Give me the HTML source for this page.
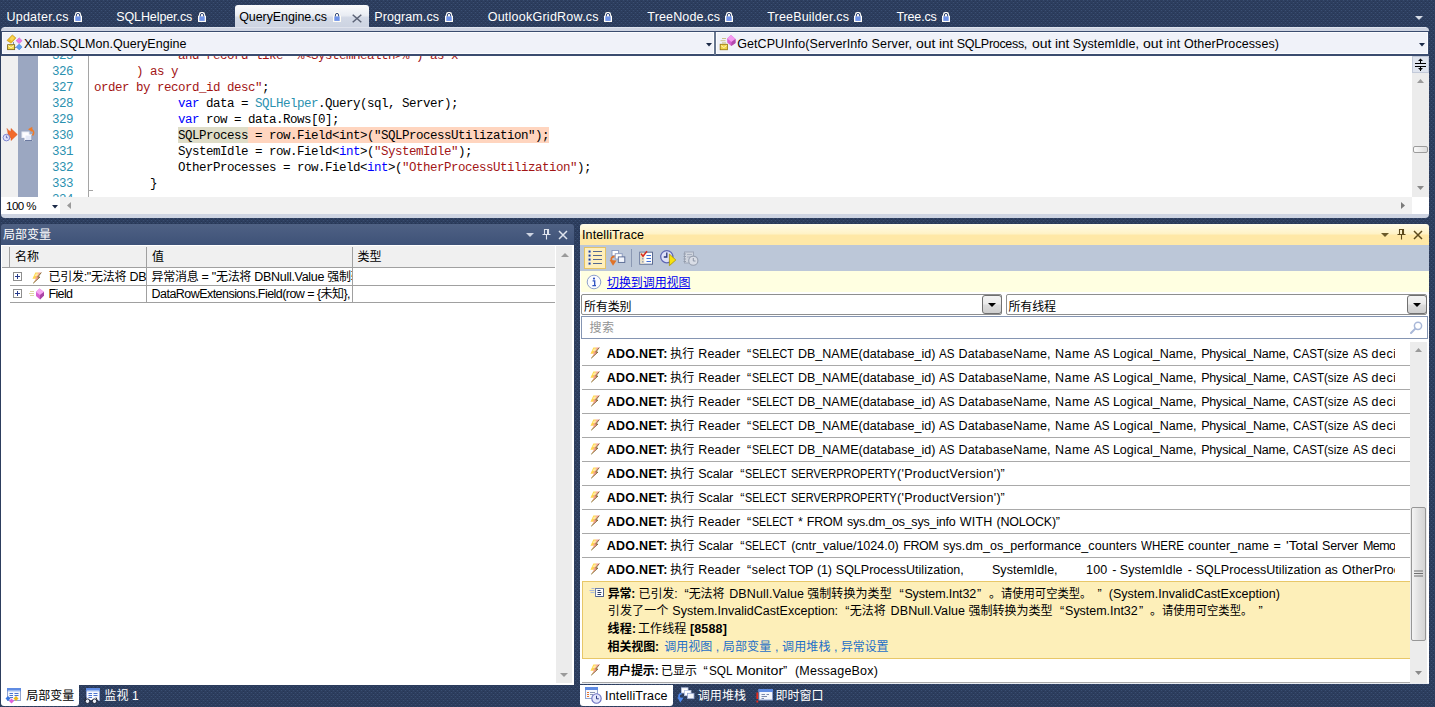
<!DOCTYPE html>
<html><head><meta charset="utf-8"><title>VS</title><style>
*{box-sizing:border-box}
html,body{margin:0;padding:0}
body{width:1435px;height:707px;overflow:hidden;position:relative;background:#2d3e5e;font:12.5px/16px "Liberation Sans","Noto Sans CJK SC",sans-serif;color:#000}
.a{position:absolute}
.t{position:absolute;white-space:pre;height:16px;line-height:16px}
.w{color:#fff}
.b{font-weight:bold}
.c{font-size:12px}
.m{font:12.5px/16px "Liberation Mono","Noto Sans CJK SC",monospace;letter-spacing:-0.5px}
.ln{color:#2b91af}
.s{color:#a31515}.k{color:#00f}.ty{color:#2b91af}
.lk{color:#1e6fc8}
svg{position:absolute;overflow:visible}
</style></head><body>
<svg class="a" style="left:0;top:0" width="1435" height="707"><defs><linearGradient id="boltg" x1="0" y1="0" x2="1" y2=".55"><stop offset=".38" stop-color="#ffd84c"/><stop offset=".62" stop-color="#f4979a"/></linearGradient><pattern id="dots" width="4" height="4" patternUnits="userSpaceOnUse"><rect width="4" height="4" fill="#2d3e5e"/><rect x="3" y="0" width="1" height="1" fill="#3a4e72"/><rect x="1" y="2" width="1" height="1" fill="#3a4e72"/><rect x="1" y="1" width="1" height="1" fill="#263555"/><rect x="3" y="3" width="1" height="1" fill="#263555"/></pattern></defs><rect width="1435" height="707" fill="url(#dots)"/></svg>
<div class="a" style="left:235px;top:5px;width:134px;height:23px;border-radius:3px 3px 0 0;background:linear-gradient(#fbfcfd,#e9ecf3 45%,#d3d9e6 55%,#ccd3e1)"></div>
<div id="t1" class="t w" style="left:6.4px;top:9px;letter-spacing:0.259px;">Updater.cs</div>
<svg style="left:74px;top:12px" width="8" height="10" viewBox="0 0 8 10"><rect x="1" y="0" width="6" height="6" rx="2.2" fill="#fffdf6"/><rect x="0" y="3.6" width="8" height="6.4" rx=".5" fill="#fffdf6"/><path d="M2.4 4.6V3Q2.4 1.4 4 1.4T5.6 3V4.6" fill="none" stroke="#33487a" stroke-width="1"/><rect x="1.3" y="4.4" width="5.4" height="4.5" fill="#6f93e9"/></svg>
<div id="t2" class="t w" style="left:116.2px;top:9px;letter-spacing:-0.093px;">SQLHelper.cs</div>
<svg style="left:198px;top:12px" width="8" height="10" viewBox="0 0 8 10"><rect x="1" y="0" width="6" height="6" rx="2.2" fill="#fffdf6"/><rect x="0" y="3.6" width="8" height="6.4" rx=".5" fill="#fffdf6"/><path d="M2.4 4.6V3Q2.4 1.4 4 1.4T5.6 3V4.6" fill="none" stroke="#33487a" stroke-width="1"/><rect x="1.3" y="4.4" width="5.4" height="4.5" fill="#6f93e9"/></svg>
<div id="t3" class="t " style="left:239.2px;top:9px;letter-spacing:-0.087px;">QueryEngine.cs</div>
<svg style="left:333px;top:12px" width="8" height="10" viewBox="0 0 8 10"><rect x="1" y="0" width="6" height="6" rx="2.2" fill="#fffdf6"/><rect x="0" y="3.6" width="8" height="6.4" rx=".5" fill="#fffdf6"/><path d="M2.4 4.6V3Q2.4 1.4 4 1.4T5.6 3V4.6" fill="none" stroke="#33487a" stroke-width="1"/><rect x="1.3" y="4.4" width="5.4" height="4.5" fill="#6f93e9"/></svg>
<div id="t4" class="t w" style="left:374.3px;top:9px;letter-spacing:0.088px;">Program.cs</div>
<svg style="left:445px;top:12px" width="8" height="10" viewBox="0 0 8 10"><rect x="1" y="0" width="6" height="6" rx="2.2" fill="#fffdf6"/><rect x="0" y="3.6" width="8" height="6.4" rx=".5" fill="#fffdf6"/><path d="M2.4 4.6V3Q2.4 1.4 4 1.4T5.6 3V4.6" fill="none" stroke="#33487a" stroke-width="1"/><rect x="1.3" y="4.4" width="5.4" height="4.5" fill="#6f93e9"/></svg>
<div id="t5" class="t w" style="left:487.7px;top:9px;letter-spacing:0.245px;">OutlookGridRow.cs</div>
<svg style="left:604px;top:12px" width="8" height="10" viewBox="0 0 8 10"><rect x="1" y="0" width="6" height="6" rx="2.2" fill="#fffdf6"/><rect x="0" y="3.6" width="8" height="6.4" rx=".5" fill="#fffdf6"/><path d="M2.4 4.6V3Q2.4 1.4 4 1.4T5.6 3V4.6" fill="none" stroke="#33487a" stroke-width="1"/><rect x="1.3" y="4.4" width="5.4" height="4.5" fill="#6f93e9"/></svg>
<div id="t6" class="t w" style="left:647.3px;top:9px;letter-spacing:0.161px;">TreeNode.cs</div>
<svg style="left:725px;top:12px" width="8" height="10" viewBox="0 0 8 10"><rect x="1" y="0" width="6" height="6" rx="2.2" fill="#fffdf6"/><rect x="0" y="3.6" width="8" height="6.4" rx=".5" fill="#fffdf6"/><path d="M2.4 4.6V3Q2.4 1.4 4 1.4T5.6 3V4.6" fill="none" stroke="#33487a" stroke-width="1"/><rect x="1.3" y="4.4" width="5.4" height="4.5" fill="#6f93e9"/></svg>
<div id="t7" class="t w" style="left:767.2px;top:9px;letter-spacing:0.182px;">TreeBuilder.cs</div>
<svg style="left:854px;top:12px" width="8" height="10" viewBox="0 0 8 10"><rect x="1" y="0" width="6" height="6" rx="2.2" fill="#fffdf6"/><rect x="0" y="3.6" width="8" height="6.4" rx=".5" fill="#fffdf6"/><path d="M2.4 4.6V3Q2.4 1.4 4 1.4T5.6 3V4.6" fill="none" stroke="#33487a" stroke-width="1"/><rect x="1.3" y="4.4" width="5.4" height="4.5" fill="#6f93e9"/></svg>
<div id="t8" class="t w" style="left:896.6px;top:9px;letter-spacing:-0.170px;">Tree.cs</div>
<svg style="left:942px;top:12px" width="8" height="10" viewBox="0 0 8 10"><rect x="1" y="0" width="6" height="6" rx="2.2" fill="#fffdf6"/><rect x="0" y="3.6" width="8" height="6.4" rx=".5" fill="#fffdf6"/><path d="M2.4 4.6V3Q2.4 1.4 4 1.4T5.6 3V4.6" fill="none" stroke="#33487a" stroke-width="1"/><rect x="1.3" y="4.4" width="5.4" height="4.5" fill="#6f93e9"/></svg>
<svg style="left:352px;top:13.5px" width="10" height="9"><path d="M.7 .7L9.3 8.3M9.3 .7L.7 8.3" stroke="#5b6275" stroke-width="1.5" fill="none"/></svg>
<svg style="left:1415px;top:16px" width="8" height="4"><path d="M0 0H8L4 4Z" fill="#d6dbe6"/></svg>
<div class="a" style="left:1px;top:27px;width:1428px;height:191px;border-radius:4px;background:#ced4e2"></div>
<div class="a" style="left:4px;top:27px;width:1422px;height:1px;background:#dfe3ed"></div>
<div class="a" style="left:1px;top:31px;width:1428px;height:25px;background:#3b4c6f"></div>
<div class="a" style="left:2px;top:32px;width:712px;height:22px;background:#f0f2f9;border:1px solid #fbfcfe"></div>
<div class="a" style="left:716px;top:32px;width:712px;height:22px;background:#f0f2f9;border:1px solid #fbfcfe"></div>
<div class="a" style="left:714px;top:32px;width:2px;height:23px;background:#67768f"></div>
<svg style="left:706px;top:43px" width="6" height="3.5"><path d="M0 0H6L3 3.500Z" fill="#1b2a47"/></svg>
<svg style="left:1419px;top:43px" width="6" height="3.5"><path d="M0 0H6L3 3.500Z" fill="#1b2a47"/></svg>
<svg style="left:6px;top:35px" width="17" height="16" viewBox="0 0 17 16">
<path d="M7.5 7V12.5H10.5" fill="none" stroke="#8592ab" stroke-width="1"/>
<path d="M6.3 -.1L9.9 2.9L5.1 8.2L1 5.4Z" fill="#eebc22" stroke="#c2920f" stroke-width=".6"/><path d="M6.2 1L8.6 3L5.8 6L3.6 4.2Z" fill="#f9d65a"/>
<path d="M13.2 2.8L16.1 5.7L13.2 8.6L10.2 5.7Z" fill="#ec7ae8" stroke="#c054bd" stroke-width=".5"/>
<path d="M13.2 9L16.1 11.9L13.2 14.9L10.2 11.9Z" fill="#5c9ff2" stroke="#3a78c8" stroke-width=".5"/>
<rect x="1.6" y="9.7" width="7" height="4.9" fill="#f4da4c" stroke="#806c1c" stroke-width=".9"/><path d="M2.2 10.6L5.1 12.7L8 10.6" fill="none" stroke="#fffad0" stroke-width=".9"/></svg>
<div id="t9" class="t " style="left:24px;top:36px;letter-spacing:0.056px;">Xnlab.SQLMon.QueryEngine</div>
<svg style="left:719px;top:35px" width="17" height="16" viewBox="0 0 17 16">
<path d="M3 3.5H7M1.5 5.7H6.5M3 7.9H7" stroke="#c9c18a" stroke-width="1"/>
<path d="M12 0L16.5 4L16.5 8L12.3 11L8.2 7.5L8.2 3.5Z" fill="#d760d2"/><path d="M12 0L16.5 4L12.5 7L8.2 3.5Z" fill="#f49af0"/><path d="M12.5 7L16.5 4V8L12.3 11Z" fill="#b24aae"/>
<rect x="1.2" y="9.3" width="7.2" height="5.4" fill="#f2d64a" stroke="#9a7c12" stroke-width=".9"/><path d="M2 10.5L4.8 12.6L7.6 10.5" fill="none" stroke="#fff7c4" stroke-width=".9"/></svg>
<div id="t10" class="t " style="left:737.3px;top:36px;letter-spacing:0.059px;">GetCPUInfo(ServerInfo</div>
<div id="t11" class="t " style="left:871.6px;top:36px;letter-spacing:0.148px;">Server,</div>
<div id="t12" class="t " style="left:915.6px;top:36px;transform:scaleX(1.1213);transform-origin:0 0;">out</div>
<div id="t13" class="t " style="left:938.8px;top:36px;transform:scaleX(1.0831);transform-origin:0 0;">int</div>
<div id="t14" class="t " style="left:956.8px;top:36px;letter-spacing:-0.314px;">SQLProcess,</div>
<div id="t15" class="t " style="left:1031.6px;top:36px;transform:scaleX(1.1213);transform-origin:0 0;">out</div>
<div id="t16" class="t " style="left:1054.8px;top:36px;transform:scaleX(1.0907);transform-origin:0 0;">int</div>
<div id="t17" class="t " style="left:1072.8px;top:36px;letter-spacing:0.079px;">SystemIdle,</div>
<div id="t18" class="t " style="left:1142.9px;top:36px;transform:scaleX(1.1270);transform-origin:0 0;">out</div>
<div id="t19" class="t " style="left:1166.4px;top:36px;letter-spacing:0.348px;">int</div>
<div id="t20" class="t " style="left:1184px;top:36px;letter-spacing:0.087px;">OtherProcesses)</div>
<div class="a" style="left:1px;top:56px;width:1411px;height:141px;background:#fff;overflow:hidden">
<div class="a" style="left:0;top:0;width:17px;height:141px;background:#f0f0f0"></div>
<div class="a" style="left:17px;top:0;width:20px;height:141px;background:#9ba7c1"></div>
<div class="a" style="left:87px;top:0;width:1px;height:141px;background:#a5a5a5"></div>
<div class="a" style="left:88px;top:134px;width:4px;height:1px;background:#a5a5a5"></div>
<div class="a" style="left:177px;top:71px;width:70px;height:16px;background:#dfddc8"></div>
<div class="a" style="left:247px;top:71px;width:301px;height:16px;background:#ffd5bf"></div>
<div class="t m ln" style="left:51px;top:-8px">325</div>
<div class="t m" style="left:177px;top:-8px"><span class="s">and record like '%&lt;SystemHealth&gt;%') as x</span></div>
<div class="t m ln" style="left:51px;top:8px">326</div>
<div class="t m" style="left:135px;top:8px"><span class="s">) as y</span></div>
<div class="t m ln" style="left:51px;top:24px">327</div>
<div class="t m" style="left:93px;top:24px"><span class="s">order by record_id desc"</span>;</div>
<div class="t m ln" style="left:51px;top:40px">328</div>
<div class="t m" style="left:177px;top:40px"><span class="k">var</span> data = <span class="ty">SQLHelper</span>.Query(sql, Server);</div>
<div class="t m ln" style="left:51px;top:56px">329</div>
<div class="t m" style="left:177px;top:56px"><span class="k">var</span> row = data.Rows[0];</div>
<div class="t m ln" style="left:51px;top:72px">330</div>
<div class="t m" style="left:177px;top:72px">SQLProcess = row.Field&lt;int&gt;("SQLProcessUtilization");</div>
<div class="t m ln" style="left:51px;top:88px">331</div>
<div class="t m" style="left:177px;top:88px">SystemIdle = row.Field&lt;<span class="k">int</span>&gt;(<span class="s">"SystemIdle"</span>);</div>
<div class="t m ln" style="left:51px;top:104px">332</div>
<div class="t m" style="left:177px;top:104px">OtherProcesses = row.Field&lt;<span class="k">int</span>&gt;(<span class="s">"OtherProcessUtilization"</span>);</div>
<div class="t m ln" style="left:51px;top:120px">333</div>
<div class="t m" style="left:149px;top:120px">}</div>
<div class="t m ln" style="left:51px;top:136px">334</div>
<svg style="left:1px;top:71px" width="16" height="16" viewBox="0 0 16 16">
<path d="M5 1.5Q6.5 4.2 9 4.5V1.5L15.3 7.5L9 13.5V10.5Q6 10.5 4.5 12.5Q7.5 7.5 5 1.5Z" fill="#f26a2a" stroke="#d84e14" stroke-width=".5"/>
<circle cx="4.4" cy="10.6" r="3.3" fill="#dfe1fb" stroke="#7f86d0" stroke-width="1"/><path d="M4.4 8.6V10.8H5.8" fill="none" stroke="#4a54a8" stroke-width=".8"/></svg>
<svg style="left:19px;top:70px" width="16" height="17" viewBox="0 0 16 17">
<rect x="2" y="6" width="7" height="5.5" fill="#fdfdff" stroke="#e8ebf5" stroke-width="1"/>
<rect x="5" y="9" width="7" height="5.5" fill="#e4e9f7" stroke="#fff" stroke-width="1"/><path d="M5 14.5H12V9" fill="none" stroke="#5a6a94" stroke-width=".9"/>
<path d="M12.5 9.5Q15.5 5.5 11 3.2" fill="none" stroke="#f07a28" stroke-width="1.5"/><path d="M12.3 .8L8 3.3L12.3 6Z" fill="#f07a28"/></svg>
</div>
<div class="a" style="left:1412px;top:56px;width:17px;height:141px;background:#ececec"></div>
<div class="a" style="left:1412px;top:56px;width:17px;height:17px;background:#dfe4ee;border:1px solid #c3cad9"></div>
<svg style="left:1414px;top:58px" width="13" height="13" viewBox="0 0 13 13"><path d="M1 5.500H12M1 8.500H12M6.500 1V5M6.500 9V13" stroke="#000" stroke-width="1" fill="none"/><path d="M4 3L6.5 .5L9 3ZM4 10L6.5 12.5L9 10Z" fill="#000"/></svg>
<svg style="left:1417px;top:79px" width="7" height="4"><path d="M0 4H7L3.5 0Z" fill="#9a9a9a"/></svg>
<svg style="left:1417px;top:186px" width="7" height="4"><path d="M0 0H7L3.5 4Z" fill="#8a8a8a"/></svg>
<div class="a" style="left:1413px;top:146px;width:15px;height:7px;border:1px solid #9c9c9c;border-radius:2px;background:linear-gradient(90deg,#fafafa,#dcdcdc)"></div>
<div class="a" style="left:1px;top:197px;width:1411px;height:17px;background:#f1f1f1"></div>
<div class="a" style="left:1412px;top:197px;width:17px;height:17px;background:#fff"></div>
<div class="a" style="left:1px;top:197px;width:59px;height:17px;background:#fff"></div>
<div id="t21" class="t " style="left:6px;top:198px;letter-spacing:-0.502px;font-size:11.5px">100 %</div>
<svg style="left:52px;top:205px" width="6" height="3.5"><path d="M0 0H6L3 3.500Z" fill="#1b2a47"/></svg>
<svg style="left:67px;top:202px" width="4" height="7"><path d="M4 0V7L0 3.5Z" fill="#9a9a9a"/></svg>
<svg style="left:1401px;top:202px" width="4" height="7"><path d="M0 0V7L4 3.5Z" fill="#7a7a7a"/></svg>
<div class="a" style="left:1px;top:224px;width:573px;height:21px;border-radius:3px 3px 0 0;background:linear-gradient(#4f6184,#3e5278)"></div>
<div id="t22" class="t w c" style="left:3px;top:227px;letter-spacing:-0.005px;">局部变量</div>
<svg style="left:526px;top:233px" width="8" height="4"><path d="M0 0H8L4 4Z" fill="#ced4e2"/></svg>
<svg style="left:542px;top:229px" width="9" height="11" viewBox="0 0 9 11"><path d="M2.5 .5H6.5V5.5H2.5ZM.5 5.5H8.5M4.5 5.5V10.5" fill="none" stroke="#dfe4ee" stroke-width="1.1"/><path d="M5.5 1V5" stroke="#dfe4ee" stroke-width="1"/></svg>
<svg style="left:558px;top:230px" width="10" height="10"><path d="M1 1L9 9M9 1L1 9" stroke="#dfe4ee" stroke-width="1.5" fill="none"/></svg>
<div class="a" style="left:1px;top:245px;width:573px;height:440px;background:#fff"></div>
<div class="a" style="left:2px;top:246px;width:553px;height:22px;background:#f0f0f0;border-bottom:1px solid #a0a0a0"></div>
<div class="a" style="left:9px;top:247px;width:1px;height:56px;background:#a0a0a0"></div>
<div class="a" style="left:146px;top:247px;width:1px;height:56px;background:#a0a0a0"></div>
<div class="a" style="left:352px;top:247px;width:1px;height:56px;background:#a0a0a0"></div>
<div class="a" style="left:9px;top:268px;width:1px;height:36px;background:#fff"></div>
<div class="a" style="left:10px;top:285px;width:545px;height:1px;background:#a0a0a0"></div>
<div class="a" style="left:10px;top:302px;width:545px;height:1px;background:#a0a0a0"></div>
<div id="t23" class="t c" style="left:15px;top:249px;letter-spacing:-0.016px;">名称</div>
<div id="t24" class="t c" style="left:151.992px;top:249px;">值</div>
<div id="t25" class="t c" style="left:357.5px;top:249px;letter-spacing:-0.016px;">类型</div>
<svg style="left:13px;top:272px" width="9" height="9"><rect x=".5" y=".5" width="8" height="8" fill="#fff" stroke="#8e8e8e"/><path d="M2 4.5H7M4.5 2V7" stroke="#263a8c" stroke-width="1"/></svg>
<svg style="left:13px;top:289px" width="9" height="9"><rect x=".5" y=".5" width="8" height="8" fill="#fff" stroke="#8e8e8e"/><path d="M2 4.5H7M4.5 2V7" stroke="#263a8c" stroke-width="1"/></svg>
<svg style="left:31.500px;top:271.500px" width="10" height="12" viewBox="0 0 11 13"><path d="M3.7 .5H10.3L6.3 5.5H8.7L1.3 12.3L4.2 7.2H.5Z" fill="url(#boltg)"/><path d="M10.3 .5L6.3 5.5H8.7L1.3 12.3" fill="none" stroke="#6f5e1c" stroke-width=".9" stroke-linejoin="round"/><path d="M4.3 1.6H7.6L5.6 4.2H2.7Z" fill="#fff3b0" opacity=".8"/></svg>
<svg style="left:29px;top:288px" width="16" height="12" viewBox="0 0 16 12"><path d="M1 3.5H5M0 5.5H5M1 7.5H5" stroke="#d8cf9a" stroke-width=".9"/><path d="M10.5 .5L15 4V7.5L11 11.5L7 8V4Z" fill="#d760d2"/><path d="M10.5 .5L15 4L11 7L7 4Z" fill="#f6a6f2"/><path d="M11 7L15 4V7.5L11 11.5Z" fill="#a844a4"/></svg>
<div class="a" style="left:48px;top:268px;width:98px;height:17px;overflow:hidden"><div id="t26" class="t " style="left:0.5px;top:1px;letter-spacing:-0.280px;"><span class="c">已引发</span>:"<span class="c">无法将</span> DBNull</div></div>
<div class="a" style="left:147px;top:268px;width:205px;height:17px;overflow:hidden"><div id="t27" class="t " style="left:4.6px;top:1px;letter-spacing:-0.292px;"><span class="c">异常消息</span> = "<span class="c">无法将</span> DBNull.Value <span class="c">强制转</span></div></div>
<div id="t28" class="t " style="left:48.5px;top:286px;letter-spacing:-0.648px;">Field</div>
<div class="a" style="left:147px;top:286px;width:205px;height:17px;overflow:hidden"><div id="t29" class="t " style="left:4.6px;top:0px;letter-spacing:-0.545px;">DataRowExtensions.Field(row = {<span class="c">未知</span>}, c</div></div>
<div class="a" style="left:556px;top:246px;width:16px;height:437px;background:#ececec"></div>
<svg style="left:561px;top:253px" width="8" height="4"><path d="M0 4H8L4 0Z" fill="#9a9a9a"/></svg>
<svg style="left:560px;top:673px" width="8" height="4"><path d="M0 0H8L4 4Z" fill="#9a9a9a"/></svg>
<div class="a" style="left:1px;top:685px;width:78px;height:21px;border-radius:0 0 3px 3px;background:#fff"></div>
<svg style="left:6.5px;top:688px" width="14" height="13" viewBox="0 0 14 13"><rect x=".5" y=".5" width="13" height="12" fill="#f6f8fd" stroke="#93a5cf"/><rect x="0" y="0" width="14" height="3.2" fill="#5f8be2"/><rect x="1" y="2.2" width="12" height="1" fill="#a9c2f2"/><path d="M2.5 5.5H6M7.5 5.5H11.5M2.5 7.5H6M7.5 7.5H11.5M2.5 9.5H6" stroke="#4a74d0" stroke-width="1"/></svg>
<svg style="left:5px;top:695px" width="14" height="9"><path d="M3 1L5.5 3.5L3 6L.5 3.5Z" fill="#3c78e0"/><path d="M11 1L13.5 3.5L11 6L8.500 3.5Z" fill="#e8b820"/><path d="M6.500 3.500L9 6L6.500 8.500L4 6Z" fill="#e060dc"/></svg>
<div id="t30" class="t c" style="left:26.3px;top:688px;letter-spacing:-0.005px;">局部变量</div>
<svg style="left:85.5px;top:688px" width="14" height="13" viewBox="0 0 14 13"><rect x=".5" y=".5" width="13" height="12" fill="#f6f8fd" stroke="#93a5cf"/><rect x="0" y="0" width="14" height="3.2" fill="#5f8be2"/><rect x="1" y="2.2" width="12" height="1" fill="#a9c2f2"/><path d="M2.5 5.5H6M7.5 5.5H11.5M2.5 7.5H6M7.5 7.5H11.5M2.5 9.5H6" stroke="#4a74d0" stroke-width="1"/></svg>
<svg style="left:83.500px;top:696px" width="14" height="8"><path d="M2 1.500L.5 5M12 1.500L13.500 5" stroke="#1c2438" stroke-width="1"/><circle cx="3.500" cy="5.200" r="2.300" fill="#e8ecf6" stroke="#1c2438"/><circle cx="10.500" cy="5.200" r="2.300" fill="#e8ecf6" stroke="#1c2438"/><path d="M5.800 4.800H8.200" stroke="#1c2438"/></svg>
<div id="t31" class="t w c" style="left:104.3px;top:688px;letter-spacing:0.095px;">监视 1</div>
<div class="a" style="left:580px;top:224px;width:849px;height:21px;border-radius:3px 3px 0 0;background:linear-gradient(#fffbe8,#fff3c8 45%,#ffe8a6 55%,#ffe8a6)"></div>
<div id="t32" class="t " style="left:582px;top:227px;letter-spacing:0.121px;">IntelliTrace</div>
<svg style="left:1381px;top:233px" width="8" height="4"><path d="M0 0H8L4 4Z" fill="#6b5a2a"/></svg>
<svg style="left:1397px;top:229px" width="9" height="11" viewBox="0 0 9 11"><path d="M2.5 .5H6.5V5.5H2.5ZM.5 5.5H8.5M4.5 5.5V10.5" fill="none" stroke="#5d4a1c" stroke-width="1.1"/><path d="M5.5 1V5" stroke="#5d4a1c" stroke-width="1"/></svg>
<svg style="left:1413px;top:230px" width="10" height="10"><path d="M1 1L9 9M9 1L1 9" stroke="#5d4a1c" stroke-width="1.5" fill="none"/></svg>
<div class="a" style="left:580px;top:245px;width:849px;height:439px;background:#fff"></div>
<div class="a" style="left:580px;top:245px;width:849px;height:26px;background:#bcc7d8"></div>
<div class="a" style="left:584px;top:247px;width:22px;height:22px;background:#ffefbb;border:1px solid #e5c365"></div>
<svg style="left:587px;top:250px" width="16" height="16" viewBox="0 0 16 16"><path d="M6 1.500H15M6 5.500H15M6 9.500H15M6 13.500H15" stroke="#55698f" stroke-width="1"/>
<g fill="#1f3a86" stroke="#dfe6f6" stroke-width=".6"><rect x="1.200" y=".2" width="2.700" height="2.700"/><rect x="1.200" y="4.200" width="2.700" height="2.700"/><rect x="1.200" y="8.200" width="2.700" height="2.700"/><rect x="1.200" y="12.200" width="2.700" height="2.700"/></g></svg>
<svg style="left:609px;top:249px" width="18" height="18" viewBox="0 0 18 18"><rect x="3" y="1.500" width="6.500" height="5.300" fill="#fff" stroke="#8797bd" stroke-width=".9"/><rect x="6.200" y="4.700" width="7" height="5.300" fill="#fff" stroke="#8797bd" stroke-width=".9"/><rect x="9.300" y="7.900" width="6.500" height="5.500" fill="#f2f5fc" stroke="#53648f" stroke-width=".9"/>
<path d="M5.500 7.500Q1 8 2.800 12" fill="none" stroke="#e07228" stroke-width="1.800"/><path d="M.6 11L4 16.700L7.600 11.500Z" fill="#e07228"/></svg>
<div class="a" style="left:631px;top:249px;width:1px;height:18px;background:#8b98b3"></div>
<svg style="left:638px;top:250px" width="16" height="16" viewBox="0 0 16 16"><rect x="1.800" y="2.200" width="12.700" height="12" fill="#fdfdfe" stroke="#5b6b92"/><rect x="2.300" y="2.700" width="4" height="11" fill="#ebe1c8"/><path d="M8.500 5.500H13M8.500 8.500H13M8.500 11.500H13" stroke="#3f6fd8" stroke-width="1.200"/><path d="M4 8H5.500V9.500H4ZM4 11H5.500V12.500H4Z" fill="#9aa3b8"/><path d="M3 3.600L5 6.200L9 1.200" fill="none" stroke="#d8281c" stroke-width="1.500"/></svg>
<svg style="left:660px;top:249px" width="17" height="18" viewBox="0 0 17 18"><circle cx="6.800" cy="7.700" r="6.100" fill="#dddff8" stroke="#6068b4" stroke-width="1.300"/><path d="M6.800 3.500V8H3.800" fill="none" stroke="#2a3478" stroke-width="1.300"/><path d="M9.400 5L15.800 11L9.400 16.700Z" fill="#f8e210" stroke="#a89208" stroke-width=".8"/></svg>
<svg style="left:683px;top:251px" width="16" height="15" viewBox="0 0 16 15" opacity=".85"><rect x="1.500" y="1" width="9" height="11" fill="#d4d8e0" stroke="#9aa2b2"/><path d="M.5 3H3M.5 5.500H3M.5 8H3M.5 10.500H3" stroke="#8e96a6"/><path d="M4 3.500H9M4 6H9" stroke="#a4acbc"/><circle cx="10.300" cy="9.700" r="4.600" fill="#dfe2e9" stroke="#9098a8" stroke-width="1.100"/><path d="M10.300 7V10H12.500" fill="none" stroke="#858d9d" stroke-width="1"/></svg>
<div class="a" style="left:581px;top:271px;width:848px;height:21px;background:#ffffe1"></div>
<svg style="left:586px;top:274px" width="16" height="16" viewBox="0 0 16 16"><circle cx="8" cy="8" r="6.8" fill="#fbfcff" stroke="#8ea0cc" stroke-width="1"/><circle cx="8" cy="4.6" r="1.05" fill="#2b4fc0"/><path d="M6.6 6.9H8.7V11.4M6.4 11.6H10" fill="none" stroke="#2b4fc0" stroke-width="1.3"/></svg>
<div id="t33" class="t c" style="left:607px;top:275px;letter-spacing:-0.086px;color:#0000f0;text-decoration:underline">切换到调用视图</div>
<div class="a" style="left:581px;top:294px;width:421px;height:21px;background:#fff;border:1px solid #8e8f8f;border-radius:2px"></div>
<div class="a" style="left:982px;top:295px;width:20px;height:19px;border:1px solid #707070;border-radius:3px;background:linear-gradient(#f4f4f4,#eaeaea 48%,#dcdcdc 52%,#cfcfcf)"></div>
<svg style="left:988px;top:303px" width="8" height="4"><path d="M0 0H8L4 4Z" fill="#000"/></svg>
<div id="t34" class="t c" style="left:584px;top:299px;letter-spacing:-0.172px;">所有类别</div>
<div class="a" style="left:1006px;top:294px;width:421px;height:21px;background:#fff;border:1px solid #8e8f8f;border-radius:2px"></div>
<div class="a" style="left:1407px;top:295px;width:20px;height:19px;border:1px solid #707070;border-radius:3px;background:linear-gradient(#f4f4f4,#eaeaea 48%,#dcdcdc 52%,#cfcfcf)"></div>
<svg style="left:1413px;top:303px" width="8" height="4"><path d="M0 0H8L4 4Z" fill="#000"/></svg>
<div id="t35" class="t c" style="left:1008.5px;top:299px;letter-spacing:-0.172px;">所有线程</div>
<div class="a" style="left:581px;top:316px;width:847px;height:23px;background:#fff;border:1px solid #8595b2"></div>
<div id="t36" class="t c" style="left:589.5px;top:320px;letter-spacing:0.484px;color:#939393">搜索</div>
<svg style="left:1410px;top:321px" width="13" height="13" viewBox="0 0 13 13"><circle cx="8" cy="4.8" r="3.6" fill="none" stroke="#a9b8d8" stroke-width="1.5"/><path d="M5.3 7.6L1 12" stroke="#a9b8d8" stroke-width="2" stroke-linecap="round"/></svg>
<div class="a" style="left:1410px;top:342px;width:17px;height:341px;background:#ececec"></div>
<svg style="left:1415px;top:348px" width="7" height="4"><path d="M0 4H7L3.5 0Z" fill="#9a9a9a"/></svg>
<svg style="left:1415px;top:671px" width="7" height="4"><path d="M0 0H7L3.5 4Z" fill="#8a8a8a"/></svg>
<div class="a" style="left:1411px;top:507px;width:15px;height:134px;border:1px solid #979797;border-radius:2px;background:linear-gradient(90deg,#f4f4f4,#e2e2e2 50%,#d4d4d4)"></div>
<svg style="left:1414px;top:570px" width="9" height="8"><path d="M0 1H9M0 3.5H9M0 6H9" stroke="#6f6f6f" stroke-width="1"/></svg>
<div class="a" style="left:582px;top:365px;width:828px;height:1px;background:#a9a9a9"></div>
<svg style="left:589.7px;top:347px" width="10" height="12" viewBox="0 0 11 13"><path d="M3.7 .5H10.3L6.3 5.5H8.7L1.3 12.3L4.2 7.2H.5Z" fill="url(#boltg)"/><path d="M10.3 .5L6.3 5.5H8.7L1.3 12.3" fill="none" stroke="#6f5e1c" stroke-width=".9" stroke-linejoin="round"/><path d="M4.3 1.6H7.6L5.6 4.2H2.7Z" fill="#fff3b0" opacity=".8"/></svg>
<div id="t37" class="t b" style="left:606.7px;top:346px;letter-spacing:0.238px;">ADO.NET:</div>
<div id="t38" class="t c" style="left:670.3px;top:346px;letter-spacing:-0.116px;">执行</div>
<div id="t39" class="t " style="left:698.3px;top:346px;letter-spacing:0.160px;">Reader</div>
<div class="a" style="left:600px;top:345px;width:795px;height:18px;overflow:hidden"><div id="t40" class="t " style="left:147.1px;top:1px;">“</div>
<div id="t41" class="t " style="left:151.9px;top:1px;transform:scaleX(0.8614);transform-origin:0 0;">SELECT</div>
<div id="t42" class="t " style="left:197.9px;top:1px;letter-spacing:0.033px;">DB_NAME(database_id)</div>
<div id="t43" class="t " style="left:339px;top:1px;transform:scaleX(0.9348);transform-origin:0 0;">AS</div>
<div id="t44" class="t " style="left:358.6px;top:1px;letter-spacing:0.139px;">DatabaseName,</div>
<div id="t45" class="t " style="left:455.1px;top:1px;letter-spacing:0.419px;">Name</div>
<div id="t46" class="t " style="left:493.5px;top:1px;transform:scaleX(0.9348);transform-origin:0 0;">AS</div>
<div id="t47" class="t " style="left:512.9px;top:1px;letter-spacing:0.026px;">Logical_Name,</div>
<div id="t48" class="t " style="left:601.2px;top:1px;letter-spacing:-0.194px;">Physical_Name,</div>
<div id="t49" class="t " style="left:693.2px;top:1px;transform:scaleX(0.9291);transform-origin:0 0;">CAST(size</div>
<div id="t50" class="t " style="left:753px;top:1px;transform:scaleX(0.8989);transform-origin:0 0;">AS</div>
<div id="t51" class="t " style="left:771.4px;top:1px;letter-spacing:0.587px;">deci</div></div>
<div class="a" style="left:582px;top:389px;width:828px;height:1px;background:#a9a9a9"></div>
<svg style="left:589.7px;top:371px" width="10" height="12" viewBox="0 0 11 13"><path d="M3.7 .5H10.3L6.3 5.5H8.7L1.3 12.3L4.2 7.2H.5Z" fill="url(#boltg)"/><path d="M10.3 .5L6.3 5.5H8.7L1.3 12.3" fill="none" stroke="#6f5e1c" stroke-width=".9" stroke-linejoin="round"/><path d="M4.3 1.6H7.6L5.6 4.2H2.7Z" fill="#fff3b0" opacity=".8"/></svg>
<div id="t52" class="t b" style="left:606.7px;top:370px;letter-spacing:0.238px;">ADO.NET:</div>
<div id="t53" class="t c" style="left:670.3px;top:370px;letter-spacing:-0.116px;">执行</div>
<div id="t54" class="t " style="left:698.3px;top:370px;letter-spacing:0.160px;">Reader</div>
<div class="a" style="left:600px;top:369px;width:795px;height:18px;overflow:hidden"><div id="t55" class="t " style="left:147.1px;top:1px;">“</div>
<div id="t56" class="t " style="left:151.9px;top:1px;transform:scaleX(0.8614);transform-origin:0 0;">SELECT</div>
<div id="t57" class="t " style="left:197.9px;top:1px;letter-spacing:0.033px;">DB_NAME(database_id)</div>
<div id="t58" class="t " style="left:339px;top:1px;transform:scaleX(0.9348);transform-origin:0 0;">AS</div>
<div id="t59" class="t " style="left:358.6px;top:1px;letter-spacing:0.139px;">DatabaseName,</div>
<div id="t60" class="t " style="left:455.1px;top:1px;letter-spacing:0.419px;">Name</div>
<div id="t61" class="t " style="left:493.5px;top:1px;transform:scaleX(0.9348);transform-origin:0 0;">AS</div>
<div id="t62" class="t " style="left:512.9px;top:1px;letter-spacing:0.026px;">Logical_Name,</div>
<div id="t63" class="t " style="left:601.2px;top:1px;letter-spacing:-0.194px;">Physical_Name,</div>
<div id="t64" class="t " style="left:693.2px;top:1px;transform:scaleX(0.9291);transform-origin:0 0;">CAST(size</div>
<div id="t65" class="t " style="left:753px;top:1px;transform:scaleX(0.8989);transform-origin:0 0;">AS</div>
<div id="t66" class="t " style="left:771.4px;top:1px;letter-spacing:0.587px;">deci</div></div>
<div class="a" style="left:582px;top:413px;width:828px;height:1px;background:#a9a9a9"></div>
<svg style="left:589.7px;top:395px" width="10" height="12" viewBox="0 0 11 13"><path d="M3.7 .5H10.3L6.3 5.5H8.7L1.3 12.3L4.2 7.2H.5Z" fill="url(#boltg)"/><path d="M10.3 .5L6.3 5.5H8.7L1.3 12.3" fill="none" stroke="#6f5e1c" stroke-width=".9" stroke-linejoin="round"/><path d="M4.3 1.6H7.6L5.6 4.2H2.7Z" fill="#fff3b0" opacity=".8"/></svg>
<div id="t67" class="t b" style="left:606.7px;top:394px;letter-spacing:0.238px;">ADO.NET:</div>
<div id="t68" class="t c" style="left:670.3px;top:394px;letter-spacing:-0.116px;">执行</div>
<div id="t69" class="t " style="left:698.3px;top:394px;letter-spacing:0.160px;">Reader</div>
<div class="a" style="left:600px;top:393px;width:795px;height:18px;overflow:hidden"><div id="t70" class="t " style="left:147.1px;top:1px;">“</div>
<div id="t71" class="t " style="left:151.9px;top:1px;transform:scaleX(0.8614);transform-origin:0 0;">SELECT</div>
<div id="t72" class="t " style="left:197.9px;top:1px;letter-spacing:0.033px;">DB_NAME(database_id)</div>
<div id="t73" class="t " style="left:339px;top:1px;transform:scaleX(0.9348);transform-origin:0 0;">AS</div>
<div id="t74" class="t " style="left:358.6px;top:1px;letter-spacing:0.139px;">DatabaseName,</div>
<div id="t75" class="t " style="left:455.1px;top:1px;letter-spacing:0.419px;">Name</div>
<div id="t76" class="t " style="left:493.5px;top:1px;transform:scaleX(0.9348);transform-origin:0 0;">AS</div>
<div id="t77" class="t " style="left:512.9px;top:1px;letter-spacing:0.026px;">Logical_Name,</div>
<div id="t78" class="t " style="left:601.2px;top:1px;letter-spacing:-0.194px;">Physical_Name,</div>
<div id="t79" class="t " style="left:693.2px;top:1px;transform:scaleX(0.9291);transform-origin:0 0;">CAST(size</div>
<div id="t80" class="t " style="left:753px;top:1px;transform:scaleX(0.8989);transform-origin:0 0;">AS</div>
<div id="t81" class="t " style="left:771.4px;top:1px;letter-spacing:0.587px;">deci</div></div>
<div class="a" style="left:582px;top:437px;width:828px;height:1px;background:#a9a9a9"></div>
<svg style="left:589.7px;top:419px" width="10" height="12" viewBox="0 0 11 13"><path d="M3.7 .5H10.3L6.3 5.5H8.7L1.3 12.3L4.2 7.2H.5Z" fill="url(#boltg)"/><path d="M10.3 .5L6.3 5.5H8.7L1.3 12.3" fill="none" stroke="#6f5e1c" stroke-width=".9" stroke-linejoin="round"/><path d="M4.3 1.6H7.6L5.6 4.2H2.7Z" fill="#fff3b0" opacity=".8"/></svg>
<div id="t82" class="t b" style="left:606.7px;top:418px;letter-spacing:0.238px;">ADO.NET:</div>
<div id="t83" class="t c" style="left:670.3px;top:418px;letter-spacing:-0.116px;">执行</div>
<div id="t84" class="t " style="left:698.3px;top:418px;letter-spacing:0.160px;">Reader</div>
<div class="a" style="left:600px;top:417px;width:795px;height:18px;overflow:hidden"><div id="t85" class="t " style="left:147.1px;top:1px;">“</div>
<div id="t86" class="t " style="left:151.9px;top:1px;transform:scaleX(0.8614);transform-origin:0 0;">SELECT</div>
<div id="t87" class="t " style="left:197.9px;top:1px;letter-spacing:0.033px;">DB_NAME(database_id)</div>
<div id="t88" class="t " style="left:339px;top:1px;transform:scaleX(0.9348);transform-origin:0 0;">AS</div>
<div id="t89" class="t " style="left:358.6px;top:1px;letter-spacing:0.139px;">DatabaseName,</div>
<div id="t90" class="t " style="left:455.1px;top:1px;letter-spacing:0.419px;">Name</div>
<div id="t91" class="t " style="left:493.5px;top:1px;transform:scaleX(0.9348);transform-origin:0 0;">AS</div>
<div id="t92" class="t " style="left:512.9px;top:1px;letter-spacing:0.026px;">Logical_Name,</div>
<div id="t93" class="t " style="left:601.2px;top:1px;letter-spacing:-0.194px;">Physical_Name,</div>
<div id="t94" class="t " style="left:693.2px;top:1px;transform:scaleX(0.9291);transform-origin:0 0;">CAST(size</div>
<div id="t95" class="t " style="left:753px;top:1px;transform:scaleX(0.8989);transform-origin:0 0;">AS</div>
<div id="t96" class="t " style="left:771.4px;top:1px;letter-spacing:0.587px;">deci</div></div>
<div class="a" style="left:582px;top:461px;width:828px;height:1px;background:#a9a9a9"></div>
<svg style="left:589.7px;top:443px" width="10" height="12" viewBox="0 0 11 13"><path d="M3.7 .5H10.3L6.3 5.5H8.7L1.3 12.3L4.2 7.2H.5Z" fill="url(#boltg)"/><path d="M10.3 .5L6.3 5.5H8.7L1.3 12.3" fill="none" stroke="#6f5e1c" stroke-width=".9" stroke-linejoin="round"/><path d="M4.3 1.6H7.6L5.6 4.2H2.7Z" fill="#fff3b0" opacity=".8"/></svg>
<div id="t97" class="t b" style="left:606.7px;top:442px;letter-spacing:0.238px;">ADO.NET:</div>
<div id="t98" class="t c" style="left:670.3px;top:442px;letter-spacing:-0.116px;">执行</div>
<div id="t99" class="t " style="left:698.3px;top:442px;letter-spacing:0.160px;">Reader</div>
<div class="a" style="left:600px;top:441px;width:795px;height:18px;overflow:hidden"><div id="t100" class="t " style="left:147.1px;top:1px;">“</div>
<div id="t101" class="t " style="left:151.9px;top:1px;transform:scaleX(0.8614);transform-origin:0 0;">SELECT</div>
<div id="t102" class="t " style="left:197.9px;top:1px;letter-spacing:0.033px;">DB_NAME(database_id)</div>
<div id="t103" class="t " style="left:339px;top:1px;transform:scaleX(0.9348);transform-origin:0 0;">AS</div>
<div id="t104" class="t " style="left:358.6px;top:1px;letter-spacing:0.139px;">DatabaseName,</div>
<div id="t105" class="t " style="left:455.1px;top:1px;letter-spacing:0.419px;">Name</div>
<div id="t106" class="t " style="left:493.5px;top:1px;transform:scaleX(0.9348);transform-origin:0 0;">AS</div>
<div id="t107" class="t " style="left:512.9px;top:1px;letter-spacing:0.026px;">Logical_Name,</div>
<div id="t108" class="t " style="left:601.2px;top:1px;letter-spacing:-0.194px;">Physical_Name,</div>
<div id="t109" class="t " style="left:693.2px;top:1px;transform:scaleX(0.9291);transform-origin:0 0;">CAST(size</div>
<div id="t110" class="t " style="left:753px;top:1px;transform:scaleX(0.8989);transform-origin:0 0;">AS</div>
<div id="t111" class="t " style="left:771.4px;top:1px;letter-spacing:0.587px;">deci</div></div>
<div class="a" style="left:582px;top:485px;width:828px;height:1px;background:#a9a9a9"></div>
<svg style="left:589.7px;top:467px" width="10" height="12" viewBox="0 0 11 13"><path d="M3.7 .5H10.3L6.3 5.5H8.7L1.3 12.3L4.2 7.2H.5Z" fill="url(#boltg)"/><path d="M10.3 .5L6.3 5.5H8.7L1.3 12.3" fill="none" stroke="#6f5e1c" stroke-width=".9" stroke-linejoin="round"/><path d="M4.3 1.6H7.6L5.6 4.2H2.7Z" fill="#fff3b0" opacity=".8"/></svg>
<div id="t112" class="t b" style="left:606.7px;top:466px;letter-spacing:0.238px;">ADO.NET:</div>
<div id="t113" class="t c" style="left:670.3px;top:466px;letter-spacing:-0.116px;">执行</div>
<div id="t114" class="t " style="left:698.3px;top:466px;letter-spacing:-0.107px;">Scalar</div>
<div class="a" style="left:600px;top:465px;width:795px;height:18px;overflow:hidden"><div id="t115" class="t " style="left:140.3px;top:1px;">“</div>
<div id="t116" class="t " style="left:145.1px;top:1px;transform:scaleX(0.8553);transform-origin:0 0;">SELECT</div>
<div id="t117" class="t " style="left:191px;top:1px;transform:scaleX(0.8821);transform-origin:0 0;">SERVERPROPERTY</div>
<div id="t118" class="t " style="left:296.9px;top:1px;letter-spacing:0.343px;">('ProductVersion')</div>
<div id="t119" class="t " style="left:400.4px;top:1px;">”</div></div>
<div class="a" style="left:582px;top:509px;width:828px;height:1px;background:#a9a9a9"></div>
<svg style="left:589.7px;top:491px" width="10" height="12" viewBox="0 0 11 13"><path d="M3.7 .5H10.3L6.3 5.5H8.7L1.3 12.3L4.2 7.2H.5Z" fill="url(#boltg)"/><path d="M10.3 .5L6.3 5.5H8.7L1.3 12.3" fill="none" stroke="#6f5e1c" stroke-width=".9" stroke-linejoin="round"/><path d="M4.3 1.6H7.6L5.6 4.2H2.7Z" fill="#fff3b0" opacity=".8"/></svg>
<div id="t120" class="t b" style="left:606.7px;top:490px;letter-spacing:0.238px;">ADO.NET:</div>
<div id="t121" class="t c" style="left:670.3px;top:490px;letter-spacing:-0.116px;">执行</div>
<div id="t122" class="t " style="left:698.3px;top:490px;letter-spacing:-0.107px;">Scalar</div>
<div class="a" style="left:600px;top:489px;width:795px;height:18px;overflow:hidden"><div id="t123" class="t " style="left:140.3px;top:1px;">“</div>
<div id="t124" class="t " style="left:145.1px;top:1px;transform:scaleX(0.8553);transform-origin:0 0;">SELECT</div>
<div id="t125" class="t " style="left:191px;top:1px;transform:scaleX(0.8821);transform-origin:0 0;">SERVERPROPERTY</div>
<div id="t126" class="t " style="left:296.9px;top:1px;letter-spacing:0.343px;">('ProductVersion')</div>
<div id="t127" class="t " style="left:400.4px;top:1px;">”</div></div>
<div class="a" style="left:582px;top:533px;width:828px;height:1px;background:#a9a9a9"></div>
<svg style="left:589.7px;top:515px" width="10" height="12" viewBox="0 0 11 13"><path d="M3.7 .5H10.3L6.3 5.5H8.7L1.3 12.3L4.2 7.2H.5Z" fill="url(#boltg)"/><path d="M10.3 .5L6.3 5.5H8.7L1.3 12.3" fill="none" stroke="#6f5e1c" stroke-width=".9" stroke-linejoin="round"/><path d="M4.3 1.6H7.6L5.6 4.2H2.7Z" fill="#fff3b0" opacity=".8"/></svg>
<div id="t128" class="t b" style="left:606.7px;top:514px;letter-spacing:0.238px;">ADO.NET:</div>
<div id="t129" class="t c" style="left:670.3px;top:514px;letter-spacing:-0.116px;">执行</div>
<div id="t130" class="t " style="left:698.3px;top:514px;letter-spacing:0.160px;">Reader</div>
<div class="a" style="left:600px;top:513px;width:795px;height:18px;overflow:hidden"><div id="t131" class="t " style="left:147.1px;top:1px;">“</div>
<div id="t132" class="t " style="left:152px;top:1px;transform:scaleX(0.8532);transform-origin:0 0;">SELECT</div>
<div id="t133" class="t " style="left:197.913px;top:1px;">*</div>
<div id="t134" class="t " style="left:206.8px;top:1px;letter-spacing:-0.238px;">FROM</div>
<div id="t135" class="t " style="left:247px;top:1px;letter-spacing:-0.233px;">sys.dm_os_sys_info</div>
<div id="t136" class="t " style="left:359.7px;top:1px;letter-spacing:0.254px;">WITH</div>
<div id="t137" class="t " style="left:396.5px;top:1px;letter-spacing:-0.218px;">(NOLOCK)</div>
<div id="t138" class="t " style="left:455.8px;top:1px;">”</div></div>
<div class="a" style="left:582px;top:557px;width:828px;height:1px;background:#a9a9a9"></div>
<svg style="left:589.7px;top:539px" width="10" height="12" viewBox="0 0 11 13"><path d="M3.7 .5H10.3L6.3 5.5H8.7L1.3 12.3L4.2 7.2H.5Z" fill="url(#boltg)"/><path d="M10.3 .5L6.3 5.5H8.7L1.3 12.3" fill="none" stroke="#6f5e1c" stroke-width=".9" stroke-linejoin="round"/><path d="M4.3 1.6H7.6L5.6 4.2H2.7Z" fill="#fff3b0" opacity=".8"/></svg>
<div id="t139" class="t b" style="left:606.7px;top:538px;letter-spacing:0.238px;">ADO.NET:</div>
<div id="t140" class="t c" style="left:670.3px;top:538px;letter-spacing:-0.116px;">执行</div>
<div id="t141" class="t " style="left:698.3px;top:538px;letter-spacing:-0.107px;">Scalar</div>
<div class="a" style="left:600px;top:537px;width:795px;height:18px;overflow:hidden"><div id="t142" class="t " style="left:140.3px;top:1px;">“</div>
<div id="t143" class="t " style="left:145.2px;top:1px;transform:scaleX(0.8470);transform-origin:0 0;">SELECT</div>
<div id="t144" class="t " style="left:191.2px;top:1px;letter-spacing:-0.006px;">(cntr_value/1024.0)</div>
<div id="t145" class="t " style="left:303.2px;top:1px;letter-spacing:-0.437px;">FROM</div>
<div id="t146" class="t " style="left:342.9px;top:1px;letter-spacing:0.074px;">sys.dm_os_performance_counters</div>
<div id="t147" class="t " style="left:540.8px;top:1px;transform:scaleX(0.9241);transform-origin:0 0;">WHERE</div>
<div id="t148" class="t " style="left:587.9px;top:1px;letter-spacing:0.107px;">counter_name</div>
<div id="t149" class="t " style="left:673.594px;top:1px;">=</div>
<div id="t150" class="t " style="left:686.1px;top:1px;transform:scaleX(1.1112);transform-origin:0 0;">'Total</div>
<div id="t151" class="t " style="left:721.9px;top:1px;letter-spacing:-0.086px;">Server</div>
<div id="t152" class="t " style="left:762.9px;top:1px;letter-spacing:-0.541px;">Memory</div></div>
<div class="a" style="left:582px;top:581px;width:828px;height:1px;background:#a9a9a9"></div>
<svg style="left:589.7px;top:563px" width="10" height="12" viewBox="0 0 11 13"><path d="M3.7 .5H10.3L6.3 5.5H8.7L1.3 12.3L4.2 7.2H.5Z" fill="url(#boltg)"/><path d="M10.3 .5L6.3 5.5H8.7L1.3 12.3" fill="none" stroke="#6f5e1c" stroke-width=".9" stroke-linejoin="round"/><path d="M4.3 1.6H7.6L5.6 4.2H2.7Z" fill="#fff3b0" opacity=".8"/></svg>
<div id="t153" class="t b" style="left:606.7px;top:562px;letter-spacing:0.238px;">ADO.NET:</div>
<div id="t154" class="t c" style="left:670.3px;top:562px;letter-spacing:-0.116px;">执行</div>
<div id="t155" class="t " style="left:698.3px;top:562px;letter-spacing:0.160px;">Reader</div>
<div class="a" style="left:600px;top:561px;width:795px;height:18px;overflow:hidden"><div id="t156" class="t " style="left:147.1px;top:1px;">“</div>
<div id="t157" class="t " style="left:151.8px;top:1px;letter-spacing:0.189px;">select</div>
<div id="t158" class="t " style="left:188.6px;top:1px;letter-spacing:-0.392px;">TOP</div>
<div id="t159" class="t " style="left:217px;top:1px;letter-spacing:-0.141px;">(1)</div>
<div id="t160" class="t " style="left:235.8px;top:1px;letter-spacing:0.008px;">SQLProcessUtilization,</div>
<div id="t161" class="t " style="left:392px;top:1px;letter-spacing:0.029px;">SystemIdle,</div>
<div id="t162" class="t " style="left:486.1px;top:1px;letter-spacing:0.120px;">100</div>
<div id="t163" class="t " style="left:512.214px;top:1px;">-</div>
<div id="t164" class="t " style="left:519.8px;top:1px;letter-spacing:0.095px;">SystemIdle</div>
<div id="t165" class="t " style="left:587.714px;top:1px;">-</div>
<div id="t166" class="t " style="left:595.7px;top:1px;letter-spacing:0.042px;">SQLProcessUtilization</div>
<div id="t167" class="t " style="left:724.7px;top:1px;letter-spacing:-0.203px;">as</div>
<div id="t168" class="t " style="left:741.9px;top:1px;letter-spacing:0.154px;">OtherProcesses</div></div>
<div class="a" style="left:582px;top:581px;width:828px;height:78px;background:#fdefb9;border:1px solid #e8c768;border-right:0"></div>
<svg style="left:589px;top:587px" width="16" height="11" viewBox="0 0 16 11"><rect x="6.500" y="1.500" width="8" height="8" fill="#fff" stroke="#6d7ea6"/><path d="M7 9.500H14.500V2" fill="none" stroke="#50618c"/><path d="M8.500 3.500H11.500M8.500 5.500H12.500M8.500 7.500H12" stroke="#2c3c66" stroke-width="1"/><path d="M2.500 1.500H5.500M.5 3.500H5.500M1.500 5.500H5.500" stroke="#a9b9dc" stroke-width="1"/></svg>
<div id="t169" class="t b c" style="left:607.8px;top:586px;letter-spacing:-0.250px;">异常:</div>
<div id="t170" class="t c" style="left:638.6px;top:586px;letter-spacing:-0.148px;">已引发:</div>
<div id="t171" class="t " style="left:684.4px;top:586px;">“</div>
<div id="t172" class="t c" style="left:688.8px;top:586px;letter-spacing:-0.208px;">无法将</div>
<div id="t173" class="t " style="left:729.2px;top:586px;letter-spacing:0.134px;">DBNull.Value</div>
<div id="t174" class="t c" style="left:807.2px;top:586px;letter-spacing:0.081px;">强制转换为类型</div>
<div id="t175" class="t " style="left:899.6px;top:586px;">“</div>
<div id="t176" class="t " style="left:904.4px;top:586px;letter-spacing:-0.105px;">System.Int32</div>
<div id="t177" class="t " style="left:977px;top:586px;">”</div>
<div id="t178" class="t c" style="left:989.1px;top:586px;">。</div>
<div id="t179" class="t c" style="left:1001.2px;top:586px;transform:scaleX(0.9405);transform-origin:0 0;">请使用可空类型。</div>
<div id="t180" class="t " style="left:1097.4px;top:586px;">”</div>
<div id="t181" class="t " style="left:1108.7px;top:586px;letter-spacing:0.036px;">(System.InvalidCastException)</div>
<div id="t182" class="t c" style="left:607.8px;top:603px;letter-spacing:0.146px;">引发了一个</div>
<div id="t183" class="t " style="left:672.3px;top:603px;letter-spacing:0.016px;">System.InvalidCastException:</div>
<div id="t184" class="t " style="left:845.2px;top:603px;">“</div>
<div id="t185" class="t c" style="left:849.8px;top:603px;letter-spacing:-0.008px;">无法将</div>
<div id="t186" class="t " style="left:890.6px;top:603px;letter-spacing:0.089px;">DBNull.Value</div>
<div id="t187" class="t c" style="left:968.4px;top:603px;letter-spacing:0.014px;">强制转换为类型</div>
<div id="t188" class="t " style="left:1059.9px;top:603px;">“</div>
<div id="t189" class="t " style="left:1065.1px;top:603px;letter-spacing:-0.032px;">System.Int32</div>
<div id="t190" class="t " style="left:1139px;top:603px;">”</div>
<div id="t191" class="t c" style="left:1149.9px;top:603px;">。</div>
<div id="t192" class="t c" style="left:1162px;top:603px;transform:scaleX(0.9394);transform-origin:0 0;">请使用可空类型。</div>
<div id="t193" class="t " style="left:1258.5px;top:603px;">”</div>
<div id="t194" class="t b c" style="left:607.6px;top:621px;letter-spacing:0.150px;">线程:</div>
<div id="t195" class="t c" style="left:637.9px;top:621px;letter-spacing:0.161px;">工作线程</div>
<div id="t196" class="t b" style="left:689.9px;top:621px;letter-spacing:0.172px;">[8588]</div>
<div id="t197" class="t b c" style="left:607.6px;top:639px;letter-spacing:-0.125px;">相关视图:</div>
<div id="t198" class="t lk c" style="left:664.2px;top:639px;letter-spacing:0.028px;">调用视图</div>
<div id="t199" class="t lk" style="left:715.8px;top:639px;">,</div>
<div id="t200" class="t lk c" style="left:722.8px;top:639px;letter-spacing:0.161px;">局部变量</div>
<div id="t201" class="t lk" style="left:775px;top:639px;">,</div>
<div id="t202" class="t lk c" style="left:782px;top:639px;letter-spacing:0.161px;">调用堆栈</div>
<div id="t203" class="t lk" style="left:834px;top:639px;">,</div>
<div id="t204" class="t lk c" style="left:841px;top:639px;letter-spacing:-0.172px;">异常设置</div>
<div class="a" style="left:582px;top:682px;width:828px;height:1px;background:#a9a9a9"></div>
<svg style="left:589.7px;top:664px" width="10" height="12" viewBox="0 0 11 13"><path d="M3.7 .5H10.3L6.3 5.5H8.7L1.3 12.3L4.2 7.2H.5Z" fill="url(#boltg)"/><path d="M10.3 .5L6.3 5.5H8.7L1.3 12.3" fill="none" stroke="#6f5e1c" stroke-width=".9" stroke-linejoin="round"/><path d="M4.3 1.6H7.6L5.6 4.2H2.7Z" fill="#fff3b0" opacity=".8"/></svg>
<div id="t205" class="t b c" style="left:607.2px;top:663px;letter-spacing:-0.125px;">用户提示:</div>
<div id="t206" class="t c" style="left:661.1px;top:663px;letter-spacing:-0.008px;">已显示</div>
<div id="t207" class="t " style="left:703.6px;top:663px;">“</div>
<div id="t208" class="t " style="left:708.9px;top:663px;transform:scaleX(0.9394);transform-origin:0 0;">SQL</div>
<div id="t209" class="t " style="left:736.4px;top:663px;transform:scaleX(1.1298);transform-origin:0 0;">Monitor</div>
<div id="t210" class="t " style="left:783.1px;top:663px;">”</div>
<div id="t211" class="t " style="left:795px;top:663px;letter-spacing:0.210px;">(MessageBox)</div>
<div class="a" style="left:580px;top:683px;width:849px;height:1px;background:#e9ecf2"></div>
<div class="a" style="left:580px;top:685px;width:93px;height:21px;border-radius:0 0 3px 3px;background:#fff"></div>
<svg style="left:585px;top:687px" width="13" height="12" viewBox="0 0 13 12"><rect x=".5" y=".5" width="12" height="11" fill="#f6f8fd" stroke="#93a5cf"/><rect x="0" y="0" width="13" height="3" fill="#5f8be2"/><path d="M2 5.500H4M2 7.500H4M2 9.500H4" stroke="#e8742a"/><path d="M5 5.500H10M5 7.500H8" stroke="#8a96b4"/></svg>
<svg style="left:591px;top:692.500px" width="11" height="11"><circle cx="5.500" cy="5.500" r="4.700" fill="#e4e6fb" stroke="#6a70c0" stroke-width="1.100"/><path d="M5.500 2.800V5.800H7.800" fill="none" stroke="#2a3a88" stroke-width="1"/></svg>
<div id="t212" class="t " style="left:605px;top:688px;letter-spacing:0.166px;">IntelliTrace</div>
<svg style="left:677px;top:687px" width="18" height="17" viewBox="0 0 18 17"><rect x="4.500" y=".8" width="6.500" height="5.200" fill="#fff" stroke="#b9c6e6" stroke-width=".8"/><rect x="7.500" y="3.500" width="6.500" height="5.200" fill="#fff" stroke="#b9c6e6" stroke-width=".8"/><rect x="10.500" y="6.300" width="6.500" height="5.400" fill="#f2f5fc" stroke="#93a4cf" stroke-width=".8"/><path d="M4.500 6.500Q.8 7.500 2.500 11" fill="none" stroke="#4f8af0" stroke-width="1.700"/><path d="M.3 10.300L3.300 15.500L6.500 10.800Z" fill="#4f8af0"/></svg>
<div id="t213" class="t w c" style="left:697.7px;top:688px;letter-spacing:0.095px;">调用堆栈</div>
<svg style="left:755.500px;top:688.500px" width="17" height="14" viewBox="0 0 17 14"><rect x="3" y=".5" width="13.500" height="10.500" fill="#f4f6fb" stroke="#8ea0cc"/><rect x="2.500" y="0" width="14.500" height="3" fill="#5f8be2"/><path d="M5.500 5.500H9M10.500 5.500H13M5.500 7.500H11M5.500 9.500H8" stroke="#7c8aac"/><path d="M1.300 3.500V10M1.300 11.500V13.500" stroke="#e8281a" stroke-width="1.800"/></svg>
<div id="t214" class="t w c" style="left:775.6px;top:688px;letter-spacing:-0.005px;">即时窗口</div>
</body></html>
